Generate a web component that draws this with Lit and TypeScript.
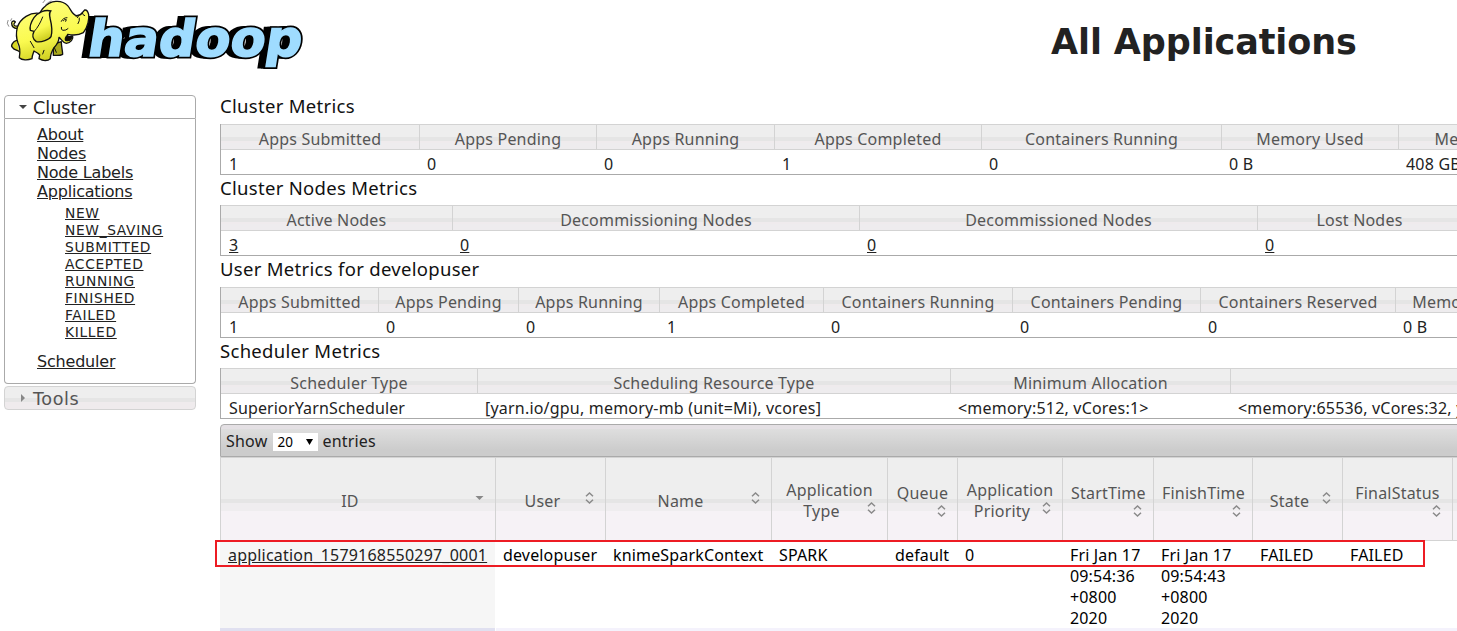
import { LitElement, html, svg, css } from "lit";
import { customElement, property } from "lit/decorators.js";

@customElement("sort-icon")
class SortIcon extends LitElement {
  @property({ type: Boolean }) desc = false;
  static styles = css`
    :host { display: block; width: 16px; height: 16px; flex: none; }
    svg { display: block; }
  `;
  render() {
    return html`<svg width="16" height="16" viewBox="0 0 16 16">
      ${this.desc
        ? svg`<path d="M4.500 6h8l-4 4z" fill="#888"/>`
        : svg`<path d="M5 6.3l3.5-3.3 3.5 3.3M5 9.7l3.5 3.3 3.5-3.3" fill="none" stroke="#8a8a8a" stroke-width="1.5"/>`}
    </svg>`;
  }
}

@customElement("hadoop-logo")
class HadoopLogo extends LitElement {
  static styles = css`
    :host { display: block; width: 310px; height: 76px; }
    svg { display: block; }
    .word { font: bold 50px "DejaVu Sans", sans-serif; }
  `;
  render() {
    return html`<svg width="310" height="76" viewBox="0 0 310 76">
      <defs>
        <linearGradient id="skin" x1="0" y1="0" x2="0.3" y2="1">
          <stop offset="0" stop-color="#ffff84" /><stop offset="0.65" stop-color="#fafa50" /><stop offset="1" stop-color="#d2d224" />
        </linearGradient>
      </defs>
      <g class="word" transform="translate(82 56) skewX(-9)" stroke-linejoin="miter">
        <text x="-2.500" y="0" textLength="214" lengthAdjust="spacingAndGlyphs" fill="#000" stroke="#000" stroke-width="4">hadoop</text>
        <text x="1" y="0" textLength="214" lengthAdjust="spacingAndGlyphs" fill="#000" stroke="#000" stroke-width="4">hadoop</text>
        <text x="4" y="0" textLength="214" lengthAdjust="spacingAndGlyphs" fill="#000" stroke="#000" stroke-width="5">hadoop</text>
        <text x="4" y="0" textLength="214" lengthAdjust="spacingAndGlyphs" fill="#9fdcff" stroke="#9fdcff" stroke-width="1.600">hadoop</text>
      </g>
      <g transform="scale(0.33333)" stroke="#111" stroke-width="4" stroke-linejoin="round" stroke-linecap="round">
        <path d="M52 86C42 85 35 79 35 70C35 62 42 61 46 66C44 68 41 70 42 75C45 80 51 79 57 78" fill="url(#skin)" />
        <path d="M50 121C39 124 31 137 37 142C43 151 54 151 58 155" fill="#d7d722" />
        <path d="M160 136L168 130L184 125C184 142 188 153 188 163C179 168 168 166 160 166Z" fill="#aaa91c" />
        <path d="M118 40C91 36 61 54 52 82C47 102 51 121 54 129C61 143 60 161 58 173C66 181 83 181 96 176C96 167 100 160 102 153C110 157 116 161 119 165L117 176C130 184 144 183 151 176C151 164 156 153 162 143C172 133 177 121 177 112C185 118 188 129 199 130C212 128 221 117 218 109C205 111 200 110 203 103C218 106 238 105 250 98C264 81 268 55 266 44C264 35 260 29 254 30L247 38C244 43 238 47 230 47C215 44 214 29 203 17C185-2 151 0 132 22C125 29 122 35 118 40Z" fill="url(#skin)" />
        <path d="M152 33C135 28 115 37 102 53C94 65 88 78 91 91L102 94C96 106 99 118 109 125C124 128 148 119 153 110C159 92 154 70 150 54C148 43 147 38 153 32" fill="url(#skin)" />
        <path d="M103 94C113 83 122 67 128 51" fill="none" stroke-width="3" />
        <path d="M199 109C194 116 195 123 202 122C211 122 217 115 214 108C207 111 202 111 200 108Z" fill="#170c00" />
        <path d="M184 64Q189 53 201 53M190 62Q193 57 199 59L197 64M228 49L237 46L232 53M184 82Q182 90 189 91Q198 92 204 86M247 39Q248 46 254 47M238 54Q240 62 234 71M102 143L91 124M132 151L128 162M163 143L169 157" fill="none" stroke-width="3" />
        <path d="M26 79Q18 70 24 61M32 62L35 56M129 8L137-2M137 14Q145 6 153 3" fill="none" stroke="#555" stroke-width="2" />
      </g>
    </svg>`;
  }
}

type Metric = { title: string; gap: number; link?: boolean; cols: [string, string, number][] };

@customElement("metrics-table")
class MetricsTable extends LitElement {
  @property({ attribute: false }) data!: Metric;
  static styles = css`
    :host { display: block; }
    .title { height: 26px; font-size: 18.5px; letter-spacing: 0.3px; line-height: 26px; color: #111; }
    .grid { display: flex; border-left: 1px solid #aaa; }
    .col { box-sizing: border-box; flex: none; }
    .head { box-sizing: border-box; height: 26px; padding-top: 3px; border: solid #d3d3d3; border-width: 1px 1px 1px 0; text-align: center; letter-spacing: 0.2px; line-height: 23px; color: #555;
      background: linear-gradient(#eee 0 12px, #e5e5e5 12px 16px, #efebed 16px 18px, #eeecee 18px); }
    .cell { height: 24px; padding-left: 7px; border-bottom: 1px solid #aaa; letter-spacing: 0.2px; line-height: 28px; color: #222; }
    .col:first-child .cell { padding-left: 8px; letter-spacing: 0.14px; }
    .link { text-decoration: underline; }
  `;
  render() {
    return html`<div class="title" style="margin-bottom:${this.data.gap}px">${this.data.title}</div>
      <div class="grid">
        ${this.data.cols.map(([h, v, w]) => html`<div class="col" style="width:${w}px">
          <div class="head">${h}</div>
          <div class="cell"><span class=${this.data.link ? "link" : ""}>${v}</span></div>
        </div>`)}
      </div>`;
  }
}

const METRICS: Metric[] = [
  { title: "Cluster Metrics", gap: 5, cols: [["Apps Submitted", "1", 199], ["Apps Pending", "0", 177], ["Apps Running", "0", 178], ["Apps Completed", "1", 207], ["Containers Running", "0", 240], ["Memory Used", "0 B", 177], ["Memory Total", "408 GB", 178]] },
  { title: "Cluster Nodes Metrics", gap: 4, link: true, cols: [["Active Nodes", "3", 232], ["Decommissioning Nodes", "0", 407], ["Decommissioned Nodes", "0", 398], ["Lost Nodes", "0", 204]] },
  { title: "User Metrics for developuser", gap: 5, cols: [["Apps Submitted", "1", 158], ["Apps Pending", "0", 140], ["Apps Running", "0", 141], ["Apps Completed", "1", 164], ["Containers Running", "0", 189], ["Containers Pending", "0", 188], ["Containers Reserved", "0", 195], ["Memory Used", "0 B", 141]] },
  { title: "Scheduler Metrics", gap: 4, cols: [["Scheduler Type", "SuperiorYarnScheduler", 257], ["Scheduling Resource Type", "[yarn.io/gpu, memory-mb (unit=Mi), vcores]", 473], ["Minimum Allocation", "<memory:512, vCores:1>", 280], ["Maximum Allocation", "<memory:65536, vCores:32, yarn.io/gpu:8>", 620]] },
];

// Header lines, cell lines, width; an empty last header line leaves the sort icon on its own line.
const APPS: [string[], string[], number][] = [
  [["ID"], ["application_1579168550297_0001"], 276],
  [["User"], ["developuser"], 110],
  [["Name"], ["knimeSparkContext"], 166],
  [["Application", "Type"], ["SPARK"], 116],
  [["Queue", ""], ["default"], 70],
  [["Application", "Priority"], ["0"], 105],
  [["StartTime", ""], ["Fri Jan 17", "09:54:36", "+0800", "2020"], 91],
  [["FinishTime", ""], ["Fri Jan 17", "09:54:43", "+0800", "2020"], 99],
  [["State"], ["FAILED"], 90],
  [["FinalStatus", ""], ["FAILED"], 110],
  [[], [], 60],
];

const STATES = ["NEW", "NEW_SAVING", "SUBMITTED", "ACCEPTED", "RUNNING", "FINISHED", "FAILED", "KILLED"];

@customElement("app-root")
class AppRoot extends LitElement {
  static styles = css`
    :host { display: block; position: relative; width: 1457px; height: 631px; overflow: hidden; background: #fff; color: #222; font: 16px "Noto Sans", sans-serif; white-space: nowrap; }
    .top { display: flex; height: 93px; }
    h1 { margin: 19px 0 0 741px; font: bold 35px/46px "DejaVu Sans", sans-serif; letter-spacing: -0.1px; color: #222; }
    .body { display: flex; align-items: flex-start; gap: 24px; padding-left: 4px; }
    nav { flex: none; width: 192px; padding-top: 2px; font-family: "DejaVu Sans", sans-serif; }
    .acc { box-sizing: border-box; display: flex; align-items: center; height: 24px; padding: 2px 0 0 14px; border: 1px solid #aaa; border-radius: 4px 4px 0 0; font-size: 17.6px; color: #212121; }
    .acc svg { margin: -2px 6px 0 0; }
    .tools { margin-top: 2px; border-color: #d3d3d3; border-radius: 4px; color: #555; letter-spacing: 0.6px; background: linear-gradient(#eee 0 11px, #e5e5e5 11px 15px, #efebed 15px); }
    .panel { box-sizing: border-box; height: 265px; padding: 6px 0 0 32px; border: 1px solid #aaa; border-top: 0; border-radius: 0 0 4px 4px; font-size: 16px; letter-spacing: -0.2px; line-height: 19px; text-decoration: underline; }
    .panel div { width: max-content; }
    .panel .states { margin: 4px 0 11px 28px; font-size: 13.8px; letter-spacing: 0.65px; line-height: 17px; }
    main { flex: none; width: 1237px; overflow: hidden; }
    .bar { box-sizing: border-box; display: flex; align-items: center; width: 1500px; height: 33px; margin-top: 5px; padding-left: 5px; border: 1px solid #aaa; border-radius: 4px 4px 0 0; letter-spacing: 0.2px; background: linear-gradient(#e4e0e4 0 4px, #dedede 4px, #ccc 25px); }
    .select { box-sizing: border-box; display: flex; align-items: center; justify-content: space-between; width: 45px; height: 18px; margin: 2px 4px 0 6px; padding: 0 5px 0 4px; background: #fff; color: #000; font-size: 13.5px; letter-spacing: 0; }
    .apps { display: flex; }
    .col { flex: none; }
    .head { box-sizing: border-box; display: flex; flex-direction: column; justify-content: center; height: 84px; padding: 4px 8px 0; border-right: 1px solid #d3d3d3; border-top: 1px solid #d3d3d3; border-bottom: 1px solid #d3d3d3; color: #555; letter-spacing: 0.2px; line-height: 21px; text-align: center;
      background: linear-gradient(#eee 0 41px, #e5e5e5 41px 45px, #efedef 45px 53px, #f6f2f6 53px); }
    .line { height: 21px; }
    .last { display: flex; }
    .last span { flex: 1; }
    .last sort-icon { margin-top: -1px; }
    .alone { height: 16px; }
    .alone sort-icon { margin-top: -1px; }
    .cell { height: 87px; padding: 4px 7px 0; box-sizing: border-box; line-height: 21px; letter-spacing: 0.16px; color: #000; }
    .next { height: 3px; background: #f4f2fc; }
    .col:first-child .head { border-left: 1px solid #d3d3d3; }
    .col:first-child .cell { margin-right: 1px; padding-left: 8px; background: #f6f6f6; color: #222; letter-spacing: 0.21px; text-decoration: underline; }
    .col:first-child .next { margin-right: 1px; background: #e0e0f0; }
    .mark { position: absolute; box-sizing: border-box; left: 215px; top: 540px; width: 1210px; height: 27px; border: 2px solid #ed1c24; }
  `;
  render() {
    return html`
      <div class="top"><hadoop-logo></hadoop-logo><h1>All Applications</h1></div>
      <div class="body">
        <nav>
          <div class="acc"><svg width="8" height="8" viewBox="0 0 8 8"><path d="M0 2h8l-4 4z" fill="#444" /></svg>Cluster</div>
          <div class="panel">
            <div>About</div><div>Nodes</div><div>Node Labels</div><div>Applications</div>
            <div class="states">${STATES.map((s) => html`<div>${s}</div>`)}</div>
            <div>Scheduler</div>
          </div>
          <div class="acc tools"><svg width="8" height="8" viewBox="0 0 8 8"><path d="M2 0v8l4-4z" fill="#888" /></svg>Tools</div>
        </nav>
        <main>
          ${METRICS.map((m) => html`<metrics-table .data=${m}></metrics-table>`)}
          <div class="bar"><span>Show</span><span class="select">20<svg width="7" height="7" viewBox="0 0 7 7"><path d="M0 1h7l-3.500 6z" /></svg></span><span>entries</span></div>
          <div class="apps">
            ${APPS.map(([h, v, w]) => html`<div class="col" style="width:${w}px">
              <div class="head">${h.map((t, i) => i < h.length - 1
                ? html`<div class="line">${t}</div>`
                : html`<div class="line last ${t ? "" : "alone"}"><span>${t}</span><sort-icon ?desc=${t === "ID"}></sort-icon></div>`)}</div>
              <div class="cell">${v.map((t) => html`<div>${t}</div>`)}</div>
              <div class="next"></div>
            </div>`)}
          </div>
        </main>
      </div>
      <div class="mark"></div>`;
  }
}
